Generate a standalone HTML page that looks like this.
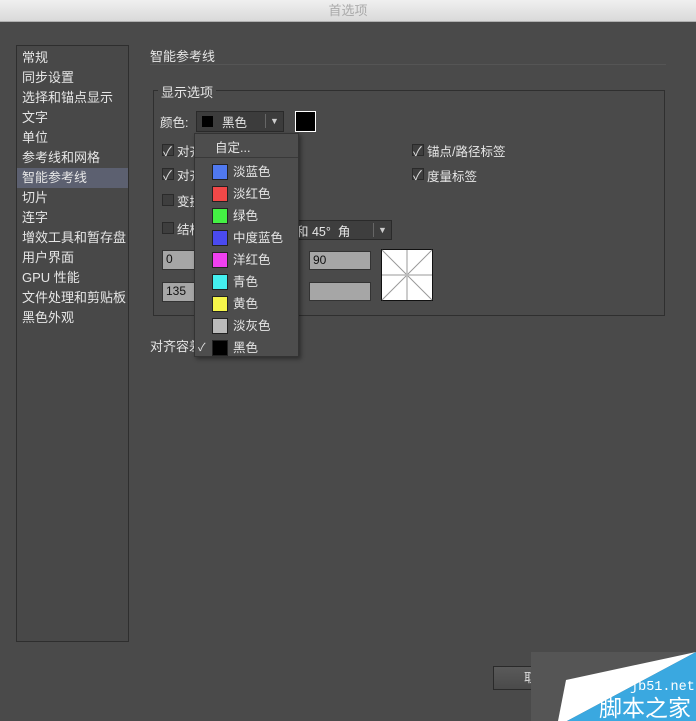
<!DOCTYPE html>
<html><head><meta charset="utf-8"><style>
*{margin:0;padding:0;box-sizing:border-box}
body{width:696px;height:721px;background:#4a4a4a;position:relative;overflow:hidden;font-family:"Liberation Sans","Noto Sans CJK SC",sans-serif;font-size:12.5px;color:#e6e6e6}
.a{position:absolute;white-space:nowrap}
.title{left:0;top:0;width:696px;height:22px;background:linear-gradient(#f0f0f0,#d9d9d9);border-bottom:1px solid #b0b0b0;color:#aaa;font-size:13px;text-align:center;line-height:22px}
.side{left:16px;top:45px;width:113px;height:597px;border:1px solid #2e2e2e;background:#484848;padding-top:2px}
.side div{height:20px;line-height:20px;padding-left:5px;font-size:13px}
.cb{width:12px;height:12px;border:1px solid #2a2a2a;background:#3e3e3e}
.ck::after{content:"✓";position:absolute;left:0;top:-4px;font-size:13px;color:#ddd}
.inp{background:#a6a6a6;border:1px solid #333;color:#111;font-size:12px;line-height:16px;padding-left:3px}
.menu{left:194px;top:133px;width:105px;height:224px;background:#4d4d4d;border:1px solid #333;box-shadow:2px 2px 4px rgba(0,0,0,.4)}
.mi{position:absolute;left:17px;width:16px;height:16px;border:1px solid #222}
.ml{position:absolute;left:38px;font-size:12.5px;margin-top:-3px}
</style></head><body>
<div class="a title">首选项</div>
<div class="a side">
<div>常规</div><div>同步设置</div><div>选择和锚点显示</div><div>文字</div><div>单位</div><div>参考线和网格</div><div style="background:#5c6070">智能参考线</div><div>切片</div><div>连字</div><div>增效工具和暂存盘</div><div>用户界面</div><div>GPU 性能</div><div>文件处理和剪贴板</div><div>黑色外观</div>
</div>
<div class="a" style="left:150px;top:46px;font-size:13px">智能参考线</div>
<div class="a" style="left:150px;top:64px;width:516px;height:1px;background:#333;border-bottom:1px solid #555"></div>
<div class="a" style="left:153px;top:90px;width:512px;height:226px;border:1px solid #2f2f2f"></div>
<div class="a" style="left:158px;top:82px;padding:0 3px;background:#4a4a4a;font-size:13px">显示选项</div>
<div class="a" style="left:160px;top:112px">颜色:</div>
<div class="a" style="left:196px;top:111px;width:88px;height:21px;background:#3c3c3c;border:1px solid #2a2a2a"></div>
<div class="a" style="left:202px;top:116px;width:11px;height:11px;background:#000"></div>
<div class="a" style="left:222px;top:112px">黑色</div>
<div class="a" style="left:265px;top:114px;width:1px;height:14px;background:#666"></div>
<div class="a" style="left:270px;top:116px;font-size:9px;color:#ccc">▼</div>
<div class="a" style="left:295px;top:111px;width:21px;height:21px;background:#000;border:1px solid #fff"></div>
<div class="a cb ck" style="left:162px;top:144px"></div><div class="a" style="left:177px;top:141px">对齐</div>
<div class="a cb ck" style="left:162px;top:168px"></div><div class="a" style="left:177px;top:165px">对齐</div>
<div class="a cb" style="left:162px;top:194px"></div><div class="a" style="left:177px;top:191px">变换</div>
<div class="a cb" style="left:162px;top:222px"></div><div class="a" style="left:177px;top:219px">结构</div>
<div class="a cb ck" style="left:412px;top:144px"></div><div class="a" style="left:427px;top:141px">锚点/路径标签</div>
<div class="a cb ck" style="left:412px;top:168px"></div><div class="a" style="left:427px;top:166px">度量标签</div>
<div class="a" style="left:280px;top:220px;width:112px;height:20px;background:#3e3e3e;border:1px solid #2a2a2a"></div>
<div class="a" style="left:296px;top:221px">和 45°&nbsp;&nbsp;角</div>
<div class="a" style="left:373px;top:223px;width:1px;height:14px;background:#666"></div>
<div class="a" style="left:378px;top:225px;font-size:9px;color:#ccc">▼</div>
<div class="a inp" style="left:162px;top:250px;width:60px;height:20px">0</div>
<div class="a inp" style="left:162px;top:282px;width:60px;height:20px">135</div>
<div class="a inp" style="left:309px;top:251px;width:62px;height:19px">90</div>
<div class="a inp" style="left:309px;top:282px;width:62px;height:19px"></div>
<svg class="a" style="left:381px;top:249px" width="52" height="52"><rect x="0.5" y="0.5" width="51" height="51" fill="#fff" stroke="#111"/><path d="M1 1L51 51M51 1L1 51" stroke="#999"/><path d="M26 1V51M1 26H51" stroke="#bbb" stroke-width="1.5"/></svg>
<div class="a" style="left:150px;top:336px;font-size:13px">对齐容差</div>
<div class="a menu">
<div class="a" style="left:20px;top:3px">自定...</div>
<div class="a" style="left:0;top:23px;width:103px;height:1px;background:#393939"></div>
<div class="mi" style="top:30px;background:#5079f0"></div><div class="ml" style="top:30px">淡蓝色</div>
<div class="mi" style="top:52px;background:#f04848"></div><div class="ml" style="top:52px">淡红色</div>
<div class="mi" style="top:74px;background:#44f044"></div><div class="ml" style="top:74px">绿色</div>
<div class="mi" style="top:96px;background:#4a4af0"></div><div class="ml" style="top:96px">中度蓝色</div>
<div class="mi" style="top:118px;background:#f040f0"></div><div class="ml" style="top:118px">洋红色</div>
<div class="mi" style="top:140px;background:#44f0f0"></div><div class="ml" style="top:140px">青色</div>
<div class="mi" style="top:162px;background:#f6f64a"></div><div class="ml" style="top:162px">黄色</div>
<div class="mi" style="top:184px;background:#bbb"></div><div class="ml" style="top:184px">淡灰色</div>
<div class="a" style="left:3px;top:205px;font-size:11px">✓</div>
<div class="mi" style="top:206px;background:#000"></div><div class="ml" style="top:206px">黑色</div>
</div>
<div class="a" style="left:493px;top:666px;width:60px;height:24px;border:1px solid #2a2a2a;background:linear-gradient(#5a5a5a,#4a4a4a);color:#ddd;line-height:22px;padding-left:30px">取</div>
<div class="a" style="left:531px;top:652px;width:165px;height:69px;background:#555"></div>
<svg class="a" style="left:531px;top:652px" width="165" height="69"><polygon points="35,28 165,0 36,69 27,69" fill="#fff"/><polygon points="36,69 165,0 165,69" fill="#3aa8e0"/></svg>
<div class="a" style="left:630px;top:680px;font-family:'Liberation Mono',monospace;font-size:13.5px;color:#fff">jb51.net</div>
<div class="a" style="left:599px;top:695px;font-size:23px;color:#fff;line-height:26px">脚本之家</div>
</body></html>
